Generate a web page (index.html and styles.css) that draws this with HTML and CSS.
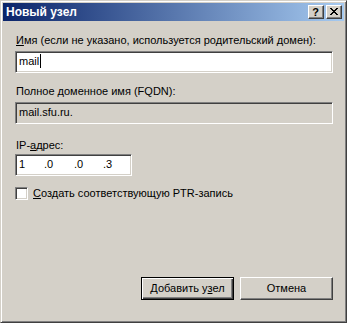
FILE: index.html
```html
<!DOCTYPE html>
<html lang="ru">
<head>
    <meta charset="UTF-8">
    <title>Новый узел</title>
    <link rel="stylesheet" href="styles.css">
</head>
<body>
    <div class="window">
        <div class="titlebar">
            <span class="title">Новый узел</span>
            <div class="caption-btns">
                <div class="cbtn help">?</div>
                <div class="cbtn close">
                    <svg width="8" height="7" viewBox="0 0 8 7">
                        <path d="M0 0h2v1h-2zM6 0h2v1h-2zM1 1h2v1h-2zM5 1h2v1h-2zM2 2h4v1h-4zM3 3h2v1h-2zM2 4h4v1h-4zM1 5h2v1h-2zM5 5h2v1h-2zM0 6h2v1h-2zM6 6h2v1h-2z" fill="#000"/>
                    </svg>
                </div>
            </div>
        </div>

        <div class="content">
            <div class="lbl"><u>И</u>мя (если не указано, используется родительский домен):</div>
            <div class="edit"><span>mail</span><span class="caret"></span></div>

            <div class="lbl">Полное доменное имя (FQDN):</div>
            <div class="edit readonly">mail.sfu.ru.</div>

            <div class="lbl lbl-ip">IP-<u>а</u>дрес:</div>
            <div class="edit ip">
                <span class="oct o1">1</span><span class="oct o2">.0</span><span class="oct o3">.0</span><span class="oct">.3</span>
            </div>

            <div class="check">
                <span class="box"></span>
                <span><u>С</u>оздать соответствующую PTR-запись</span>
            </div>

            <div class="buttons">
                <div class="btn default"><span>Добавить у<u>з</u>ел</span></div>
                <div class="btn"><span>Отмена</span></div>
            </div>
        </div>
    </div>
</body>
</html>
```

FILE: styles.css
```css
* { margin: 0; padding: 0; box-sizing: border-box; }
body { font-family: "Liberation Sans", Arial, sans-serif; font-size: 11px; color: #000; background: #d4d0c8; }
u { text-decoration: underline; text-underline-offset: 1px; }

.window { width: 347px; height: 323px; display: flex; flex-direction: column; background: #d4d0c8; border: 1px solid; border-color: #d4d0c8 #404040 #404040 #d4d0c8; box-shadow: inset 1px 1px #fff, inset -1px -1px #808080; padding: 2px; }

.titlebar { height: 18px; display: flex; align-items: center; justify-content: space-between; padding: 0 2px; background: linear-gradient(90deg, #0a246a 0%, #a6caf0 100%); }
.title { color: #fff; font-weight: bold; font-size: 12px; line-height: 18px; padding-left: 1px; }
.caption-btns { display: flex; gap: 2px; }
.cbtn { width: 16px; height: 14px; background: #d4d0c8; border: 1px solid; border-color: #fff #404040 #404040 #fff; box-shadow: inset -1px -1px #808080; display: flex; align-items: center; justify-content: center; }
.help { font-weight: bold; font-size: 11px; line-height: 12px; padding-right: 1px; }
.close svg { display: block; margin-top: -1px; margin-left: -1px; }

.content { flex: 1; display: flex; flex-direction: column; padding: 13px 11px 20px 12px; }
.lbl { line-height: 13px; margin-bottom: 4px; padding-left: 1px; }
.lbl-ip { margin-bottom: 2px; }

.edit { height: 22px; background: #fff; border: 1px solid; border-color: #808080 #fff #fff #808080; box-shadow: inset 1px 1px #404040, inset -1px -1px #d4d0c8; padding: 2px 3px 0 3px; line-height: 14px; margin-bottom: 12px; display: flex; align-items: flex-start; white-space: nowrap; }
.readonly { background: #d4d0c8; margin-bottom: 15px; }
.caret { display: inline-block; width: 1px; height: 14px; background: #000; margin-left: 1px; }

.ip { width: 117px; padding-left: 3px; margin-bottom: 11px; }
.oct { display: inline-block; }
.o1 { width: 25px; }
.o2 { width: 30px; }
.o3 { width: 29px; }

.check { display: flex; align-items: center; gap: 5px; line-height: 13px; }
.box { width: 13px; height: 13px; background: #fff; border: 1px solid; border-color: #808080 #fff #fff #808080; box-shadow: inset 1px 1px #404040, inset -1px -1px #d4d0c8; }

.buttons { margin-top: auto; display: flex; justify-content: flex-end; gap: 6px; }
.btn { width: 93px; height: 23px; background: #d4d0c8; border: 1px solid; border-color: #fff #404040 #404040 #fff; box-shadow: inset -1px -1px #808080; display: flex; align-items: center; justify-content: center; line-height: 13px; }
.btn.default { border: 1px solid #000; box-shadow: inset 1px 1px #fff, inset -1px -1px #404040, inset -2px -2px #808080; }
```
